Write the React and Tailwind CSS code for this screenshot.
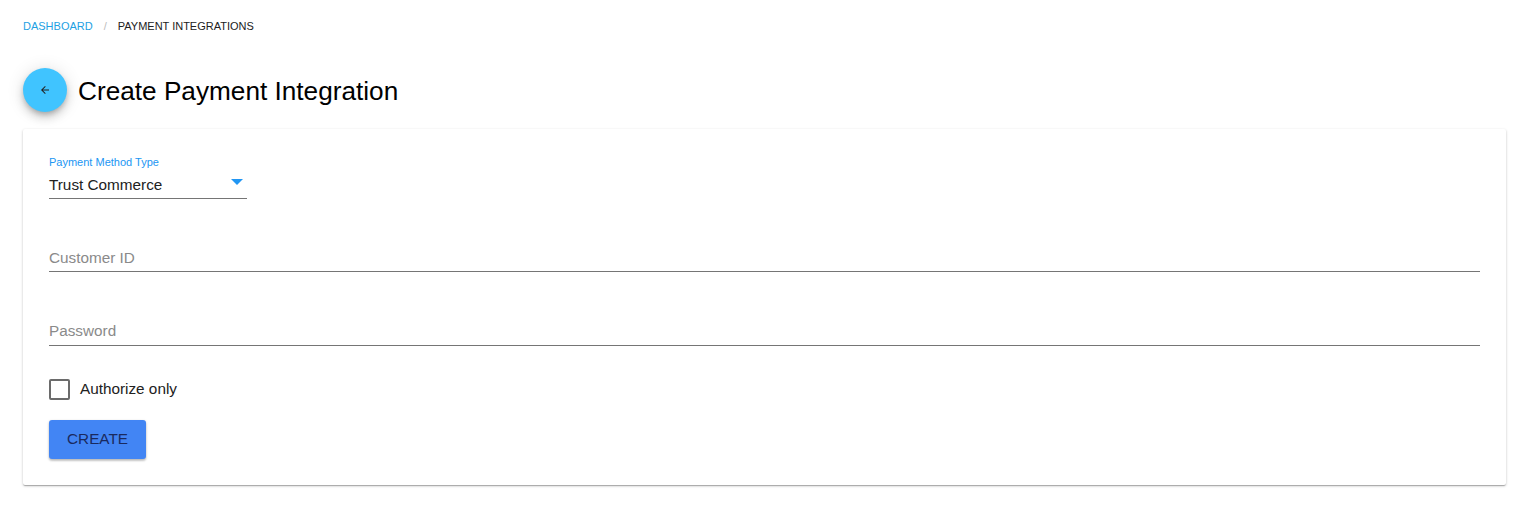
import React from "react";

export default function App() {
  return (
    <div className="min-h-[527px] bg-white" style={{ fontFamily: '"Liberation Sans", Arial, sans-serif' }}>
      <div className="pl-[23px] pr-[30px]">
        <div className="flex items-center h-[52px] text-[11px] uppercase">
          <span className="text-[#1e9fe3]">Dashboard</span>
          <span className="mx-[11px] text-[#bdbdbd]">/</span>
          <span className="text-[#212121]">Payment Integrations</span>
        </div>
        <div className="flex items-center h-[76px]">
          <button className="w-[44px] h-[44px] rounded-full bg-[#40c4ff] flex items-center justify-center shadow-[0_3px_5px_-1px_rgba(0,0,0,0.2),0_6px_10px_0_rgba(0,0,0,0.14),0_1px_18px_0_rgba(0,0,0,0.12)]">
            <svg width="12" height="12" viewBox="0 0 24 24" fill="#212121">
              <path d="M20 11H7.83l5.59-5.59L12 4l-8 8 8 8 1.41-1.41L7.83 13H20v-2z" />
            </svg>
          </button>
          <h1 className="ml-[11px] text-[26.2px] text-black leading-none mt-[2px]">Create Payment Integration</h1>
        </div>
        <div className="bg-white rounded-[2px] shadow-[0_1px_3px_0_rgba(0,0,0,0.2),0_1px_1px_0_rgba(0,0,0,0.14),0_2px_1px_-1px_rgba(0,0,0,0.12)] mt-[1px] px-[26px] pt-[27px] pb-[26px]">
          <div className="w-[198px]">
            <div className="text-[11px] text-[#2196f3] leading-[13px]">Payment Method Type</div>
            <div className="flex items-end justify-between h-[30px] border-b border-[#757575] pb-[4px]">
              <span className="text-[15.3px] text-[#212121] leading-[18px]">Trust Commerce</span>
              <svg width="12" height="6" viewBox="0 0 10 5" className="mr-[4px] mb-[9px]">
                <path d="M0 0l5 5 5-5z" fill="#2196f3" />
              </svg>
            </div>
          </div>
          <div className="mt-[46px] h-[27px] border-b border-[#757575] flex items-end pb-[4px]">
            <span className="text-[15.3px] text-[#8a8a8a] leading-[18px]">Customer ID</span>
          </div>
          <div className="mt-[46px] h-[28px] border-b border-[#757575] flex items-end pb-[5px]">
            <span className="text-[15.3px] text-[#8a8a8a] leading-[18px]">Password</span>
          </div>
          <div className="flex items-center mt-[32px]">
            <div className="w-[21px] h-[21px] border-2 border-[#6b6b6b] rounded-[2px]" />
            <span className="ml-[10px] text-[15.3px] text-[#212121]">Authorize only</span>
          </div>
          <button className="mt-[19px] w-[97px] h-[39px] bg-[#4285f4] rounded-[3px] text-[15.3px] text-[#1a2a5e] uppercase shadow-[0_1px_3px_0_rgba(0,0,0,0.2),0_2px_2px_0_rgba(0,0,0,0.14)]">
            Create
          </button>
        </div>
        <div className="h-[42px]" />
      </div>
    </div>
  );
}
